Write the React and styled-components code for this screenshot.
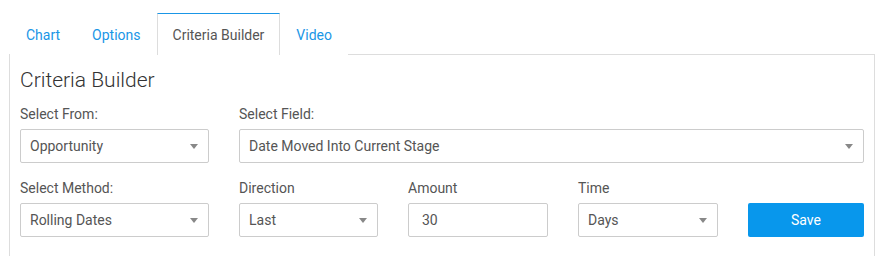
import React from 'react';
import styled, { createGlobalStyle } from 'styled-components';

const GlobalStyle = createGlobalStyle`
    body {
        margin: 0;
        background: #fff;
        font-family: Roboto, "Liberation Sans", sans-serif;
        color: #555;
    }
`;

const tabs = ['Chart', 'Options', 'Criteria Builder', 'Video'];

const Select = ({ value }) => (
    <Box>
        <Value>{ value }</Value>
        <Caret />
    </Box>
);

const Field = ({ label, children }) => (
    <FieldWrap>
        <Label>{ label }</Label>
        { children }
    </FieldWrap>
);

const App = () => (
    <Page>
        <GlobalStyle />
        <TabBar>
            { tabs.map(t => (
                <Tab key={t} active={t === 'Criteria Builder'}>{ t }</Tab>
            )) }
        </TabBar>
        <Panel>
            <Heading>Criteria Builder</Heading>
            <Row cols="189px 1fr">
                <Field label="Select From:">
                    <Select value="Opportunity" />
                </Field>
                <Field label="Select Field:">
                    <Select value="Date Moved Into Current Stage" />
                </Field>
            </Row>
            <Row cols="189px 139px 140px 140px 1fr">
                <Field label="Select Method:">
                    <Select value="Rolling Dates" />
                </Field>
                <Field label="Direction">
                    <Select value="Last" />
                </Field>
                <Field label="Amount">
                    <Input defaultValue="30" />
                </Field>
                <Field label="Time">
                    <Select value="Days" />
                </Field>
                <ButtonCell>
                    <SaveButton>Save</SaveButton>
                </ButtonCell>
            </Row>
        </Panel>
    </Page>
);

export default App;

const Page = styled.div`
    padding: 13px 15px 0 9px;
    width: 866px;
`;

const TabBar = styled.div`
    display: flex;
    padding-left: 1px;
    height: 41px;
    box-sizing: border-box;
`;

const Tab = styled.div`
    box-sizing: border-box;
    height: 42px;
    padding: 0 15px;
    display: flex;
    align-items: center;
    font-size: 14px;
    color: ${props => props.active ? '#555' : '#1a96e6'};
    background: #fff;
    border: 1px solid ${props => props.active ? '#ddd' : 'transparent'};
    border-top: 1px solid ${props => props.active ? '#1a96e6' : 'transparent'};
    border-bottom: none;
    position: relative;
    z-index: 1;
`;

const Panel = styled.div`
    border: 1px solid #ddd;
    border-bottom: none;
    padding: 10px 10px 20px;
    height: 202px;
    box-sizing: border-box;
`;

const Heading = styled.h2`
    margin: 0 0 9px;
    font-size: 21px;
    font-weight: 300;
    line-height: 30px;
    color: #333;
`;

const Row = styled.div`
    display: grid;
    grid-template-columns: ${props => props.cols};
    column-gap: 30px;
    margin-bottom: 15px;
`;

const FieldWrap = styled.div`
    display: flex;
    flex-direction: column;
`;

const Label = styled.label`
    font-size: 14px;
    line-height: 20px;
    color: #555;
    margin-bottom: 5px;
`;

const Box = styled.div`
    box-sizing: border-box;
    height: 34px;
    border: 1px solid #ccc;
    border-radius: 2px;
    display: flex;
    align-items: center;
    justify-content: space-between;
    padding: 0 10px 0 9px;
    font-size: 14px;
    color: #555;
`;

const Value = styled.span`
    white-space: nowrap;
`;

const Caret = styled.span`
    width: 0;
    height: 0;
    border-left: 4px solid transparent;
    border-right: 4px solid transparent;
    border-top: 5px solid #888;
`;

const Input = styled.input`
    box-sizing: border-box;
    height: 34px;
    width: 100%;
    border: 1px solid #ccc;
    border-radius: 2px;
    padding: 0 13px;
    font-family: inherit;
    font-size: 14px;
    color: #555;
    outline: none;
`;

const ButtonCell = styled.div`
    display: flex;
    align-items: flex-end;
`;

const SaveButton = styled.button`
    width: 100%;
    height: 34px;
    border: none;
    border-radius: 2px;
    background: #0897ec;
    color: #fff;
    font-family: inherit;
    font-size: 14px;
`;
